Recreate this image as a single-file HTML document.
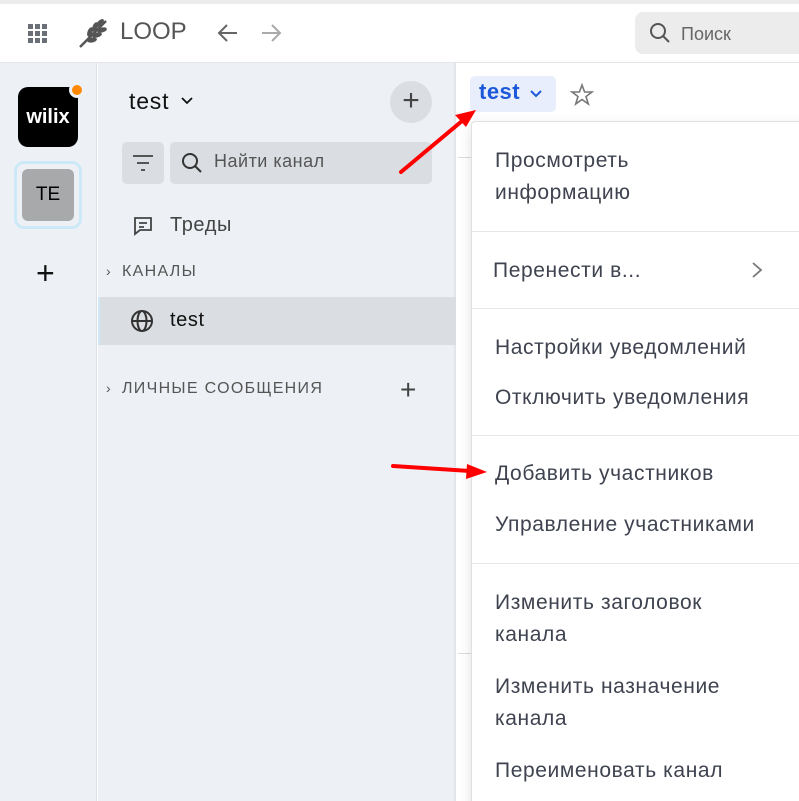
<!DOCTYPE html>
<html><head><meta charset="utf-8"><style>
*{margin:0;padding:0;box-sizing:border-box}
html,body{width:799px;height:801px;overflow:hidden}
body{background:#fff;font-family:"Liberation Sans","Noto Sans CJK SC",sans-serif;position:relative;color:#3f4350}
.a{position:absolute}
.mi{position:absolute;left:495px;font-size:21px;letter-spacing:0.6px;color:#3f4350;line-height:32px;white-space:nowrap}
.hr{position:absolute;left:472px;right:0;height:1px;background:#e6e7ea}
</style></head><body>
<div class="a" style="left:0;top:0;width:799px;height:4px;background:#ececec"></div>
<div class="a" style="left:0;top:62px;width:799px;height:1px;background:#e3e5e8"></div>
<svg class="a" style="left:28px;top:24px" width="20" height="20"><g fill="#6b6f78"><rect x="0" y="0" width="5" height="5"/><rect x="7" y="0" width="5" height="5"/><rect x="14" y="0" width="5" height="5"/><rect x="0" y="7" width="5" height="5"/><rect x="7" y="7" width="5" height="5"/><rect x="14" y="7" width="5" height="5"/><rect x="0" y="14" width="5" height="5"/><rect x="7" y="14" width="5" height="5"/><rect x="14" y="14" width="5" height="5"/></g></svg>
<svg class="a" style="left:78px;top:17px" width="32" height="32" viewBox="0 0 32 32"><path d="M2 30 L28 4" stroke="#555" stroke-width="2.5"/><g fill="#555"><ellipse cx="22" cy="6" rx="2.5" ry="5" transform="rotate(45 22 6)"/><ellipse cx="17" cy="10" rx="2.5" ry="5" transform="rotate(20 17 10)"/><ellipse cx="24" cy="13" rx="2.5" ry="5" transform="rotate(75 24 13)"/><ellipse cx="12" cy="15" rx="2.5" ry="5" transform="rotate(20 12 15)"/><ellipse cx="19" cy="18" rx="2.5" ry="5" transform="rotate(75 19 18)"/><ellipse cx="14" cy="23" rx="2.5" ry="5" transform="rotate(80 14 23)"/></g></svg>
<div class="a" style="left:120px;top:18px;font-size:24px;color:#555">LOOP</div>
<svg class="a" style="left:217px;top:23px" width="22" height="20"><path d="M20 10H3M10 2L2 10L10 18" stroke="#666" stroke-width="2" fill="none"/></svg>
<svg class="a" style="left:260px;top:23px" width="22" height="20"><path d="M2 10H19M12 2L20 10L12 18" stroke="#aaa" stroke-width="2" fill="none"/></svg>
<div class="a" style="left:635px;top:12px;width:180px;height:42px;background:#ececec;border-radius:8px"></div>
<svg class="a" style="left:649px;top:22px" width="22" height="22"><circle cx="9" cy="9" r="7" stroke="#555" stroke-width="2" fill="none"/><path d="M14 14L20 20" stroke="#555" stroke-width="2"/></svg>
<div class="a" style="left:681px;top:24px;font-size:18px;color:#666">Поиск</div>
<div class="a" style="left:0;top:63px;width:97px;height:738px;background:#edf1f5;border-right:1px solid #dde0e4"></div>
<div class="a" style="left:18px;top:87px;width:60px;height:60px;background:#000;border-radius:10px;color:#fff;font-weight:bold;font-size:20px;text-align:center;line-height:60px">wilix</div>
<div class="a" style="left:69px;top:82px;width:16px;height:16px;background:#ff8800;border:3px solid #edf1f5;border-radius:50%"></div>
<div class="a" style="left:14px;top:161px;width:68px;height:68px;border:3px solid #cde9f8;border-radius:10px"></div>
<div class="a" style="left:22px;top:169px;width:52px;height:52px;background:#a7a9ab;border-radius:6px;font-size:19px;color:#000;text-align:center;line-height:52px">TE</div>
<div class="a" style="left:36px;top:257px;font-size:32px;line-height:32px;color:#111">+</div>
<div class="a" style="left:98px;top:63px;width:358px;height:738px;background:#edf1f5;border-right:2px solid #e2e5e9"></div>
<div class="a" style="left:129px;top:88px;font-size:23px;letter-spacing:0.8px;color:#111">test</div>
<svg class="a" style="left:181px;top:97px" width="12" height="8"><path d="M1 1L6 6L11 1" stroke="#111" stroke-width="1.8" fill="none"/></svg>
<div class="a" style="left:390px;top:81px;width:42px;height:42px;border-radius:50%;background:#dadde1;font-size:30px;text-align:center;line-height:40px;color:#444">+</div>
<div class="a" style="left:122px;top:142px;width:42px;height:42px;border-radius:5px;background:#dadde1"></div>
<svg class="a" style="left:132px;top:154px" width="22" height="18"><path d="M1 2H21M5 9H17M9 16H13" stroke="#555" stroke-width="2"/></svg>
<div class="a" style="left:170px;top:142px;width:262px;height:42px;border-radius:5px;background:#dadde1"></div>
<svg class="a" style="left:180px;top:151px" width="24" height="24"><circle cx="10" cy="10" r="7" stroke="#333" stroke-width="2" fill="none"/><path d="M15 15L21 21" stroke="#333" stroke-width="2"/></svg>
<div class="a" style="left:214px;top:151px;font-size:18px;letter-spacing:0.5px;color:#555">Найти канал</div>
<svg class="a" style="left:133px;top:216px" width="20" height="20"><path d="M2 2H18V14H7L2 18Z" stroke="#444" stroke-width="1.8" fill="none"/><path d="M6 7H14M6 11H11" stroke="#444" stroke-width="1.8"/></svg>
<div class="a" style="left:170px;top:214px;font-size:20px;letter-spacing:0.6px;color:#444">Треды</div>
<div class="a" style="left:106px;top:263px;font-size:14px;color:#555">›</div>
<div class="a" style="left:122px;top:263px;font-size:16px;letter-spacing:1.3px;color:#555">КАНАЛЫ</div>
<div class="a" style="left:98px;top:297px;width:358px;height:48px;background:#dadde1;border-left:2px solid #cde9f8"></div>
<svg class="a" style="left:130px;top:309px" width="24" height="24"><circle cx="12" cy="12" r="10" stroke="#333" stroke-width="2" fill="none"/><ellipse cx="12" cy="12" rx="4.5" ry="10" stroke="#333" stroke-width="2" fill="none"/><path d="M2 12H22" stroke="#333" stroke-width="2"/></svg>
<div class="a" style="left:170px;top:309px;font-size:20px;letter-spacing:0.6px;color:#111">test</div>
<div class="a" style="left:106px;top:380px;font-size:14px;color:#555">›</div>
<div class="a" style="left:122px;top:380px;font-size:16px;letter-spacing:1.3px;color:#555">ЛИЧНЫЕ СООБЩЕНИЯ</div>
<div class="a" style="left:400px;top:374px;font-size:28px;color:#444">+</div>
<div class="a" style="left:470px;top:76px;width:86px;height:36px;background:#e8eefb;border-radius:5px"></div>
<div class="a" style="left:479px;top:79px;font-size:22px;letter-spacing:0.5px;color:#1c58d9;font-weight:bold">test</div>
<svg class="a" style="left:530px;top:90px" width="12" height="8"><path d="M1 1L6 6L11 1" stroke="#1c58d9" stroke-width="2" fill="none"/></svg>
<svg class="a" style="left:570px;top:83px" width="24" height="24"><path d="M12 2L14.6 9H22L16 13.5L18.3 21L12 16.5L5.7 21L8 13.5L2 9H9.4Z" stroke="#777" stroke-width="1.6" fill="none"/></svg>
<div class="a" style="left:458px;top:157px;width:14px;height:1px;background:#ddd"></div>
<div class="a" style="left:458px;top:653px;width:14px;height:1px;background:#ddd"></div>
<div class="a" style="left:471px;top:121px;width:340px;height:700px;background:#fff;border:1px solid #e0e0e0;border-radius:4px;box-shadow:0 4px 12px rgba(0,0,0,.12)"></div>
<div class="mi" style="top:145px">Просмотреть<br>информацию</div>
<div class="hr" style="top:231px"></div>
<div class="mi" style="top:255px;left:493px">Перенести в...</div>
<svg class="a" style="left:750px;top:261px" width="14" height="18"><path d="M3 2L11 9L3 16" stroke="#777" stroke-width="1.8" fill="none"/></svg>
<div class="hr" style="top:308px"></div>
<div class="mi" style="top:332px">Настройки уведомлений</div>
<div class="mi" style="top:382px">Отключить уведомления</div>
<div class="hr" style="top:435px"></div>
<div class="mi" style="top:458px">Добавить участников</div>
<div class="mi" style="top:509px">Управление участниками</div>
<div class="hr" style="top:563px"></div>
<div class="mi" style="top:587px">Изменить заголовок<br>канала</div>
<div class="mi" style="top:671px">Изменить назначение<br>канала</div>
<div class="mi" style="top:755px">Переименовать канал</div>
<svg class="a" style="left:0;top:0" width="799" height="801"><g stroke="#f00" stroke-width="4" stroke-linecap="round" fill="#f00"><path d="M401 172L462 121"/><path d="M393 466L470 471"/></g><path d="M476 110L455 115L466 127Z" fill="#f00"/><path d="M487 472L467 464L466 479Z" fill="#f00"/></svg>
</body></html>
